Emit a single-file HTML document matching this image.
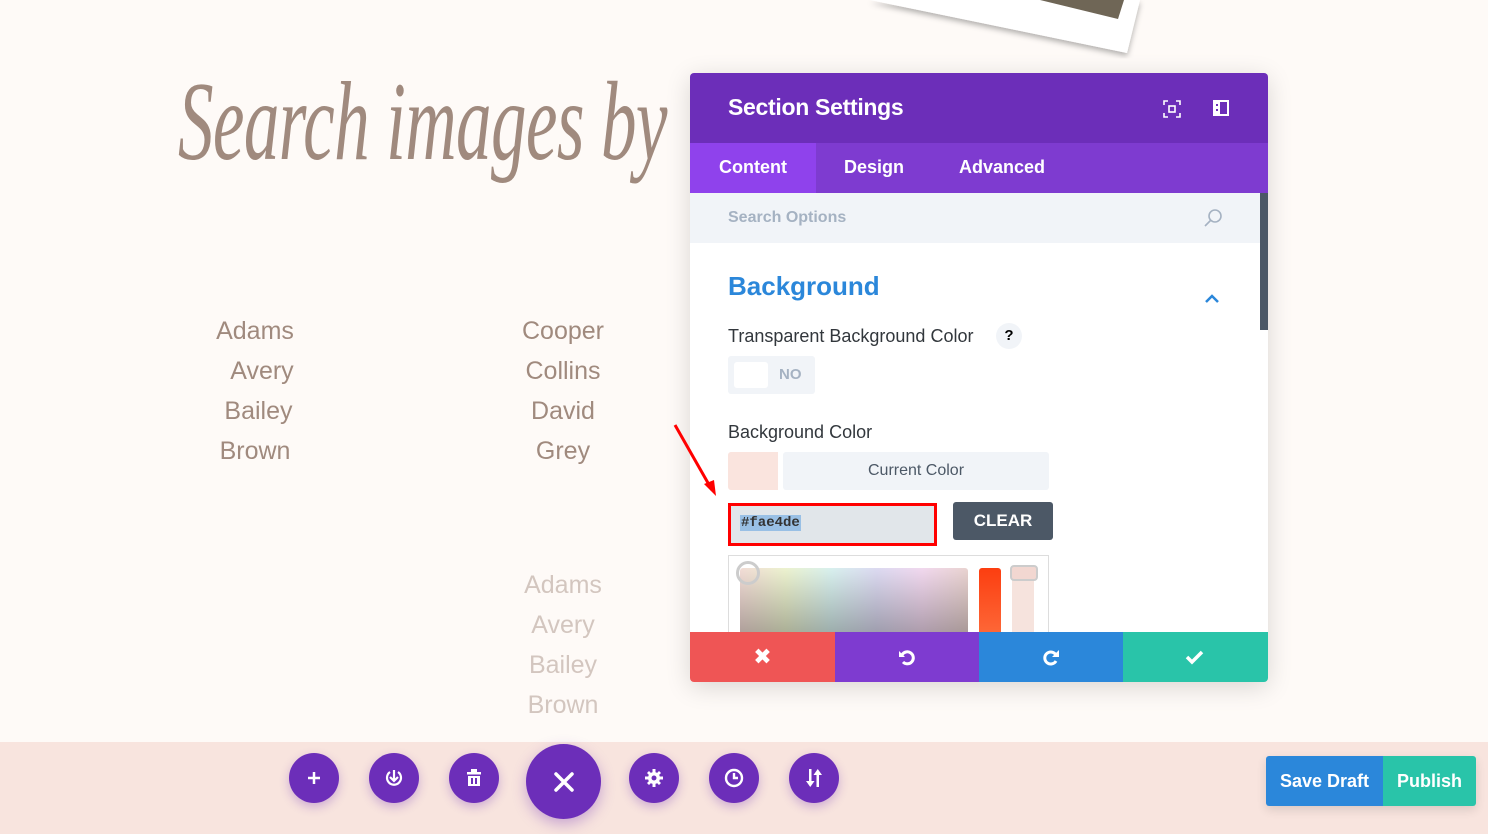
<!DOCTYPE html>
<html><head><style>
*{margin:0;padding:0;box-sizing:border-box}
body{width:1488px;height:834px;overflow:hidden;background:#fefaf7;font-family:"Liberation Sans","DejaVu Sans",sans-serif;position:relative}
.a{position:absolute}
.title{left:178px;top:66px;font-family:"Liberation Serif",serif;font-style:italic;font-size:112px;line-height:1;color:#a08a7e;letter-spacing:-1px;white-space:nowrap;transform:scaleX(0.635);transform-origin:left}
.list{font-size:25px;color:#a08a7e;line-height:40px;text-align:center;width:200px}
.panel{left:690px;top:73px;width:578px;height:609px;background:#fff;border-radius:4px;box-shadow:0 5px 25px rgba(0,0,0,.15);overflow:hidden}
.btn{position:absolute;top:753px;width:50px;height:50px;border-radius:50%;background:#6c2eb9;box-shadow:0 4px 10px rgba(108,46,185,.3);display:flex;align-items:center;justify-content:center}
</style></head><body>
<svg class="a" style="left:0;top:0" width="1488" height="70">
<defs><filter id="s"><feDropShadow dx="0" dy="3" stdDeviation="3" flood-opacity=".3"/></filter></defs>
<polygon points="870,0 1140,0 1127,53" fill="#fff" filter="url(#s)"/>
<polygon points="1040,0 1124,0 1118,19" fill="#6f6656"/>
</svg>
<div class="a title">Search images by</div>
<div class="a list" style="left:155px;top:311px">Adams<br>&nbsp;&nbsp;Avery<br>&nbsp;Bailey<br>Brown</div>
<div class="a list" style="left:463px;top:311px">Cooper<br>Collins<br>David<br>Grey</div>
<div class="a list" style="left:463px;top:565px;color:#d3c6bf">Adams<br>Avery<br>Bailey<br>Brown</div>

<div class="a panel">
 <div class="a" style="left:0;top:0;width:578px;height:70px;background:#6c2eb9"></div>
 <div class="a" style="left:38px;top:21px;font-size:23px;font-weight:bold;color:#fff;letter-spacing:-0.3px">Section Settings</div>
 <svg class="a" style="left:473px;top:27px" width="18" height="18" fill="none" stroke="#fff" stroke-width="1.6"><path d="M1 5V1h4M13 1h4v4M17 13v4h-4M5 17H1v-4"/><rect x="6" y="6" width="6" height="6"/></svg>
 <svg class="a" style="left:523px;top:27px" width="16" height="16"><rect x="1" y="1" width="14" height="14" fill="none" stroke="#fff" stroke-width="2"/><rect x="1" y="1" width="6" height="14" fill="#fff"/><rect x="3" y="4" width="2" height="2" fill="#6c2eb9"/><rect x="3" y="9" width="2" height="2" fill="#6c2eb9"/></svg>
 <div class="a" style="left:0;top:70px;width:578px;height:50px;background:#7e3bd0"></div>
 <div class="a" style="left:0;top:70px;width:126px;height:50px;background:#8f42ec"></div>
 <div class="a" style="left:29px;top:84px;font-size:18px;font-weight:bold;color:#fff">Content</div>
 <div class="a" style="left:154px;top:84px;font-size:18px;font-weight:bold;color:#fff">Design</div>
 <div class="a" style="left:269px;top:84px;font-size:18px;font-weight:bold;color:#fff">Advanced</div>
 <div class="a" style="left:0;top:120px;width:570px;height:50px;background:#f1f4f8"></div>
 <div class="a" style="left:570px;top:120px;width:8px;height:137px;background:#4c5866"></div>
 <div class="a" style="left:38px;top:136px;font-size:16px;font-weight:bold;color:#a5b2c2">Search Options</div>
 <svg class="a" style="left:513px;top:134px" width="22" height="22" fill="none" stroke="#a5b2c2" stroke-width="1.6"><circle cx="12" cy="9" r="6"/><line x1="8" y1="13" x2="2" y2="19"/></svg>
 <div class="a" style="left:38px;top:198px;font-size:26px;font-weight:bold;color:#2b87da">Background</div>
 <svg class="a" style="left:513px;top:220px" width="18" height="12" fill="none" stroke="#2b87da" stroke-width="2.5"><path d="M3 9l6-6 6 6"/></svg>
 <div class="a" style="left:38px;top:253px;font-size:18px;color:#32373c">Transparent Background Color</div>
 <div class="a" style="left:306px;top:250px;width:26px;height:26px;border-radius:50%;background:#f1f4f8;font-size:15px;font-weight:bold;text-align:center;line-height:26px">?</div>
 <div class="a" style="left:38px;top:283px;width:87px;height:38px;background:#f1f4f8;border-radius:3px"></div>
 <div class="a" style="left:44px;top:289px;width:34px;height:26px;background:#fff;border-radius:3px"></div>
 <div class="a" style="left:89px;top:293px;font-size:15px;font-weight:bold;color:#a5b2c2">NO</div>
 <div class="a" style="left:38px;top:349px;font-size:18px;color:#32373c">Background Color</div>
 <div class="a" style="left:38px;top:379px;width:50px;height:38px;background:#fae4de;border-radius:3px 0 0 3px"></div>
 <div class="a" style="left:93px;top:379px;width:266px;height:38px;background:#f1f4f8;border-radius:3px;font-size:16px;color:#4c5866;text-align:center;line-height:38px">Current Color</div>
 <div class="a" style="left:38px;top:430px;width:209px;height:43px;border:3px solid #f00;background:#e1e6ea"></div>
 <div class="a" style="left:50px;top:442px;font-family:'Liberation Mono',monospace;font-size:14px;font-weight:bold;color:#333;background:#99c0e5;padding:0 1px">#fae4de</div>
 <div class="a" style="left:263px;top:429px;width:100px;height:38px;background:#4c5866;border-radius:3px;color:#fff;font-weight:bold;font-size:17px;text-align:center;line-height:38px">CLEAR</div>
 <div class="a" style="left:38px;top:482px;width:321px;height:80px;border:1px solid #ddd;background:#fff"></div>
 <div class="a" style="left:50px;top:495px;width:228px;height:70px;border-radius:3px;background:linear-gradient(to bottom,rgba(0,0,0,0),rgba(0,0,0,.3)),linear-gradient(to right,#f2dcd6,#ecf2cf,#d8f0ee,#dcdaf1,#f1d8ee,#e9d3d0)"></div>
 <div class="a" style="left:46px;top:488px;width:24px;height:24px;border-radius:50%;border:3px solid #ccc"></div>
 <div class="a" style="left:289px;top:495px;width:22px;height:70px;background:linear-gradient(#fc3e10,#fd6a3a);border-radius:3px"></div>
 <div class="a" style="left:322px;top:493px;width:22px;height:70px;background:#f6e3dd"></div>
 <div class="a" style="left:320px;top:492px;width:28px;height:16px;border:2px solid #ccc;border-radius:4px;background:#f2d7d1"></div>
 <div class="a" style="left:0;top:559px;width:145px;height:50px;background:#ef5555;display:flex;align-items:center;justify-content:center;color:#fff;font-size:22px;font-weight:bold">✖</div>
 <div class="a" style="left:145px;top:559px;width:144px;height:50px;background:#7e3bd0"><svg style="position:absolute;left:62px;top:15px" width="20" height="20" fill="none" stroke="#fff" stroke-width="3"><path d="M5 8a6 6 0 1 1 1 7"/><path d="M2 4v6h6" stroke-width="0" fill="#fff"/></svg></div>
 <div class="a" style="left:289px;top:559px;width:144px;height:50px;background:#2b87da"><svg style="position:absolute;left:62px;top:15px" width="20" height="20" fill="none" stroke="#fff" stroke-width="3"><path d="M15 8a6 6 0 1 0 0 6"/><path d="M18 3v7h-7z" stroke-width="0" fill="#fff"/></svg></div>
 <div class="a" style="left:433px;top:559px;width:145px;height:50px;background:#29c4a9"><svg style="position:absolute;left:62px;top:16px" width="20" height="18" fill="none" stroke="#fff" stroke-width="3.5"><path d="M2 9l5 5 10-10"/></svg></div>
</div>
<svg class="a" style="left:670px;top:420px" width="50" height="80"><line x1="5" y1="5" x2="42" y2="70" stroke="#f00" stroke-width="3"/><polygon points="46,76 34,64 44,60" fill="#f00"/></svg>

<div class="a" style="left:0;top:742px;width:1488px;height:92px;background:#f8e4de"></div>
<div class="btn" style="left:289px"><svg width="16" height="16" stroke="#fff" stroke-width="2.5"><path d="M8 2v12M2 8h12"/></svg></div>
<div class="btn" style="left:369px"><svg width="20" height="20" fill="none" stroke="#fff" stroke-width="2.2"><path d="M6 4a7 7 0 1 0 8 0"/><path d="M10 2v10M6 9l4 4 4-4"/></svg></div>
<div class="btn" style="left:449px"><svg width="16" height="18" fill="#fff"><rect x="1" y="3" width="14" height="2.5"/><rect x="5" y="0" width="6" height="3"/><path d="M2 7h12v10H2z M5 9v6h2V9z M9 9v6h2V9z" fill-rule="evenodd"/></svg></div>
<div class="a" style="left:526px;top:744px;width:75px;height:75px;border-radius:50%;background:#6c2eb9;box-shadow:0 5px 14px rgba(108,46,185,.35);display:flex;align-items:center;justify-content:center"><svg width="22" height="22" stroke="#fff" stroke-width="3.5" stroke-linecap="round"><path d="M3 3l16 16M19 3L3 19"/></svg></div>
<div class="btn" style="left:629px"><svg width="20" height="20" fill="#fff"><circle cx="10" cy="10" r="6"/><path d="M8.5 1h3v4h-3zM8.5 15h3v4h-3zM1 8.5h4v3H1zM15 8.5h4v3h-4zM3 5l2-2 3 3-2 2zM15 17l2-2-3-3-2 2zM3 15l2 2 3-3-2-2zM17 5l-2-2-3 3 2 2z"/><circle cx="10" cy="10" r="2.5" fill="#6c2eb9"/></svg></div>
<div class="btn" style="left:709px"><svg width="22" height="22" fill="none" stroke="#fff" stroke-width="2.4"><circle cx="11" cy="11" r="8"/><path d="M11 6v5h4"/></svg></div>
<div class="btn" style="left:789px"><svg width="20" height="22" fill="#fff"><rect x="5" y="2" width="2.5" height="14"/><path d="M2 14h8.5l-4.25 6z"/><rect x="12.5" y="6" width="2.5" height="14"/><path d="M9.5 8h8.5l-4.25-6z"/></svg></div>
<div class="a" style="left:1266px;top:756px;width:210px;height:50px;border-radius:3px;overflow:hidden;box-shadow:0 4px 10px rgba(0,0,0,.12);display:flex;font-size:18px;font-weight:bold;color:#fff">
 <div style="width:117px;background:#2b87da;text-align:center;line-height:50px">Save Draft</div>
 <div style="width:93px;background:#29c4a9;text-align:center;line-height:50px">Publish</div>
</div>
</body></html>
